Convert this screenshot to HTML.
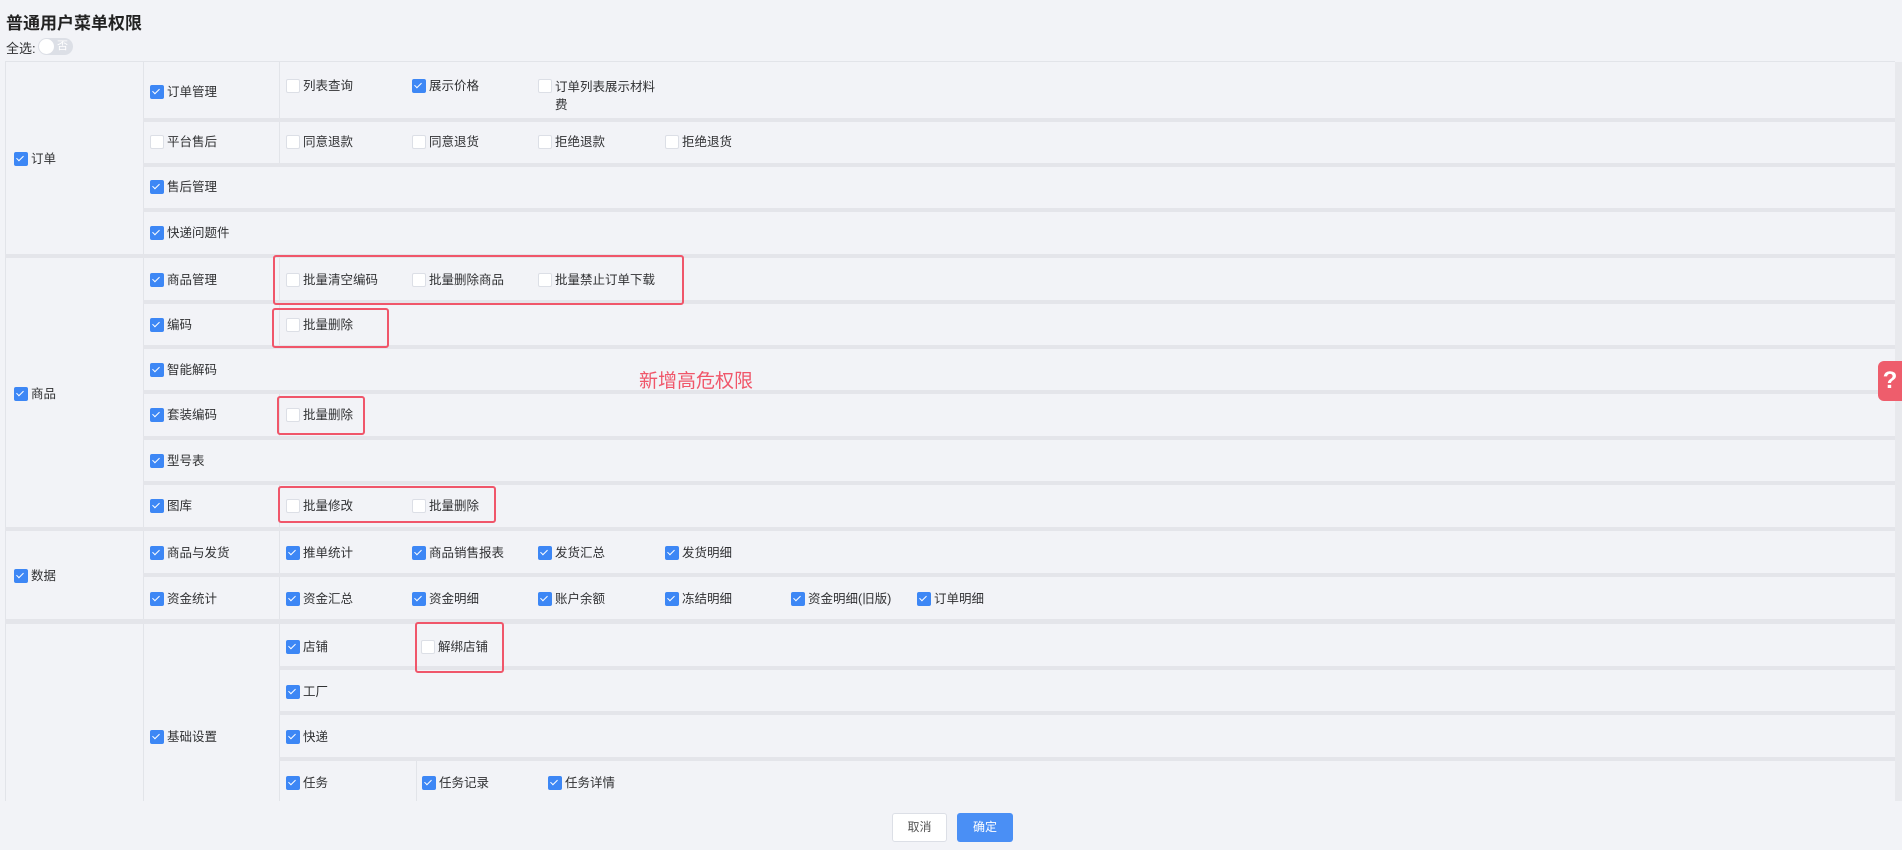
<!DOCTYPE html>
<html><head><meta charset="utf-8">
<style>
*{margin:0;padding:0;box-sizing:border-box}
body{width:1902px;height:850px;background:#f2f3f7;font-family:"Liberation Sans","Noto Sans CJK SC",sans-serif;font-size:12.5px;color:#303133;position:relative;overflow:hidden}
.a{position:absolute}
.t{position:absolute;left:6px;top:9px;font-size:17px;font-weight:bold;color:#222}
.hl{position:absolute;height:4px;background:#e4e5ea}
.vl{position:absolute;width:1px;background:#e2e4e9}
.i{position:absolute;height:16px;line-height:16px;white-space:nowrap;padding-left:17px}
.i::before{content:"";position:absolute;left:0;top:1px;width:12px;height:12px;background:#fff;border:1px solid #dcdfe6;border-radius:2px}
.i.k::before{background:#3d87f5;border-color:#3d87f5}
.i.k::after{content:"";position:absolute;left:4px;top:3px;width:3px;height:6px;border:solid #fff;border-width:0 1.5px 1.5px 0;transform:rotate(45deg)}
.rb{position:absolute;border:2px solid #f0566a;border-radius:3px}
</style></head><body>
<div class="t">普通用户菜单权限</div>
<div class="a" style="left:6px;top:38px;font-size:13px">全选:</div>
<div class="a" style="left:38px;top:38px;width:35px;height:17px;border-radius:9px;background:#dcdfe6"></div>
<div class="a" style="left:39px;top:39px;width:15px;height:15px;border-radius:50%;background:#fff"></div>
<div class="a" style="left:57px;top:39px;font-size:11px;color:#fff;line-height:15px">否</div>

<div class="a" style="left:5px;top:61px;width:1890px;height:740px;border-left:1px solid #e2e4e9;border-top:1px solid #e2e4e9;overflow:hidden"></div>
<div class="vl" style="left:143px;top:62px;height:739px"></div>
<div class="vl" style="left:279px;top:62px;height:104px"></div>
<div class="vl" style="left:279px;top:256px;height:91px"></div>
<div class="vl" style="left:279px;top:392px;height:46px"></div>
<div class="vl" style="left:279px;top:483px;height:46px"></div>
<div class="vl" style="left:279px;top:529px;height:92px"></div>
<div class="vl" style="left:279px;top:624px;height:177px"></div>
<div class="vl" style="left:416px;top:759px;height:42px"></div>
<div class="vl" style="left:1895px;top:62px;height:739px;width:7px;background:#e8e9ed"></div>

<div class="hl" style="left:143px;top:118px;width:1752px"></div>
<div class="hl" style="left:143px;top:163px;width:1752px"></div>
<div class="hl" style="left:143px;top:208px;width:1752px"></div>
<div class="hl" style="left:5px;top:254px;width:1890px"></div>
<div class="hl" style="left:143px;top:300px;width:1752px"></div>
<div class="hl" style="left:143px;top:345px;width:1752px"></div>
<div class="hl" style="left:143px;top:390px;width:1752px"></div>
<div class="hl" style="left:143px;top:436px;width:1752px"></div>
<div class="hl" style="left:143px;top:481px;width:1752px"></div>
<div class="hl" style="left:5px;top:527px;width:1890px"></div>
<div class="hl" style="left:143px;top:573px;width:1752px"></div>
<div class="hl" style="left:5px;top:619px;width:1890px;height:5px"></div>
<div class="hl" style="left:279px;top:666px;width:1616px"></div>
<div class="hl" style="left:279px;top:711px;width:1616px"></div>
<div class="hl" style="left:279px;top:757px;width:1616px"></div>

<div class="i k" style="left:14px;top:151px">订单</div>
<div class="i k" style="left:14px;top:386px">商品</div>
<div class="i k" style="left:14px;top:568px">数据</div>

<div class="i k" style="left:150px;top:84px">订单管理</div>
<div class="i" style="left:286px;top:78px">列表查询</div>
<div class="i k" style="left:412px;top:78px">展示价格</div>
<div class="i" style="left:538px;top:78px;white-space:normal;width:126px;line-height:18px;height:auto">订单列表展示材料费</div>
<div class="i" style="left:150px;top:134px">平台售后</div>
<div class="i" style="left:286px;top:134px">同意退款</div>
<div class="i" style="left:412px;top:134px">同意退货</div>
<div class="i" style="left:538px;top:134px">拒绝退款</div>
<div class="i" style="left:665px;top:134px">拒绝退货</div>
<div class="i k" style="left:150px;top:179px">售后管理</div>
<div class="i k" style="left:150px;top:225px">快递问题件</div>

<div class="i k" style="left:150px;top:272px">商品管理</div>
<div class="i" style="left:286px;top:272px">批量清空编码</div>
<div class="i" style="left:412px;top:272px">批量删除商品</div>
<div class="i" style="left:538px;top:272px">批量禁止订单下载</div>
<div class="i k" style="left:150px;top:317px">编码</div>
<div class="i" style="left:286px;top:317px">批量删除</div>
<div class="i k" style="left:150px;top:362px">智能解码</div>
<div class="i k" style="left:150px;top:407px">套装编码</div>
<div class="i" style="left:286px;top:407px">批量删除</div>
<div class="i k" style="left:150px;top:453px">型号表</div>
<div class="i k" style="left:150px;top:498px">图库</div>
<div class="i" style="left:286px;top:498px">批量修改</div>
<div class="i" style="left:412px;top:498px">批量删除</div>

<div class="i k" style="left:150px;top:545px">商品与发货</div>
<div class="i k" style="left:286px;top:545px">推单统计</div>
<div class="i k" style="left:412px;top:545px">商品销售报表</div>
<div class="i k" style="left:538px;top:545px">发货汇总</div>
<div class="i k" style="left:665px;top:545px">发货明细</div>
<div class="i k" style="left:150px;top:591px">资金统计</div>
<div class="i k" style="left:286px;top:591px">资金汇总</div>
<div class="i k" style="left:412px;top:591px">资金明细</div>
<div class="i k" style="left:538px;top:591px">账户余额</div>
<div class="i k" style="left:665px;top:591px">冻结明细</div>
<div class="i k" style="left:791px;top:591px">资金明细(旧版)</div>
<div class="i k" style="left:917px;top:591px">订单明细</div>

<div class="i k" style="left:150px;top:729px">基础设置</div>
<div class="i k" style="left:286px;top:639px">店铺</div>
<div class="i" style="left:421px;top:639px">解绑店铺</div>
<div class="i k" style="left:286px;top:684px">工厂</div>
<div class="i k" style="left:286px;top:729px">快递</div>
<div class="i k" style="left:286px;top:775px">任务</div>
<div class="i k" style="left:422px;top:775px">任务记录</div>
<div class="i k" style="left:548px;top:775px">任务详情</div>

<div class="rb" style="left:273px;top:255px;width:411px;height:50px"></div>
<div class="rb" style="left:272px;top:308px;width:117px;height:40px"></div>
<div class="rb" style="left:277px;top:396px;width:88px;height:39px"></div>
<div class="rb" style="left:278px;top:486px;width:218px;height:37px"></div>
<div class="rb" style="left:415px;top:622px;width:89px;height:51px"></div>
<div class="a" style="left:639px;top:366px;font-size:19px;color:#f0566a">新增高危权限</div>

<div class="a" style="left:1878px;top:361px;width:24px;height:40px;background:#ee5d6c;border-radius:6px 0 0 6px;color:#fff;font-weight:bold;font-size:24px;line-height:40px;text-align:center">?</div>

<div class="a" style="left:892px;top:813px;width:55px;height:29px;background:#fff;border:1px solid #dcdfe6;border-radius:3px;text-align:center;line-height:27px;font-size:12px;color:#555">取消</div>
<div class="a" style="left:957px;top:813px;width:56px;height:29px;background:#4a8ff5;border-radius:3px;text-align:center;line-height:29px;font-size:12px;color:#fff">确定</div>
</body></html>
